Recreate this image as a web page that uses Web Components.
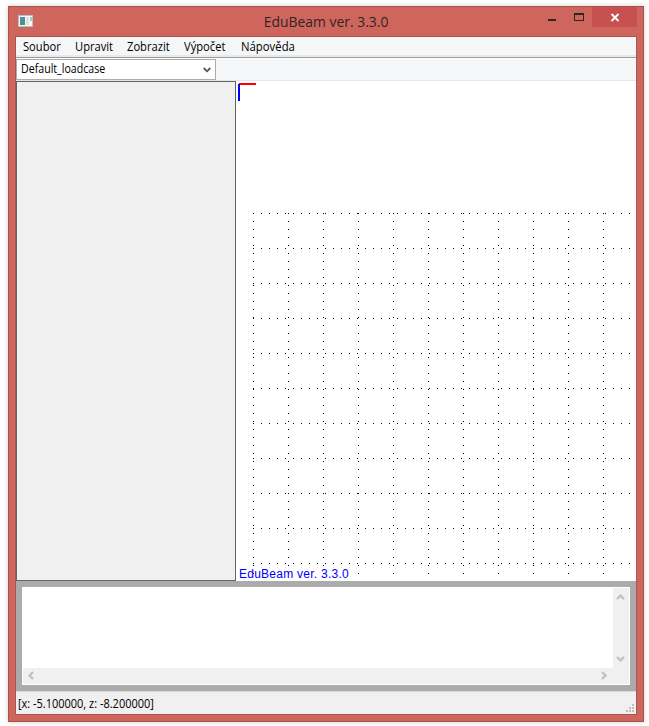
<!DOCTYPE html>
<html lang="cs"><head><meta charset="utf-8"><title>EduBeam</title>
<style>html,body{margin:0;background:#fff}body{width:649px;height:726px;overflow:hidden;font-family:"Open Sans","Noto Sans",sans-serif}</style></head>
<body>
<app-window>
<title-bar slot="title">EduBeam ver. 3.3.0</title-bar>
<menu-bar><menu-item style="--w:38px;--s:.93">Soubor</menu-item><menu-item style="--w:38px;--s:.93">Upravit</menu-item><menu-item style="--w:43px;--s:.93">Zobrazit</menu-item><menu-item style="--w:43px;--s:.93">Výpočet</menu-item><menu-item style="--w:54px;--s:.945">Nápověda</menu-item></menu-bar>
<tool-bar><combo-box>Default_loadcase</combo-box></tool-bar>
<work-area><side-panel></side-panel><grid-canvas>EduBeam ver. 3.3.0</grid-canvas></work-area>
<output-pane></output-pane>
<status-bar>[x: -5.100000, z: -8.200000]</status-bar>
</app-window>
<script>
const define=(name,html,setup)=>customElements.define(name,class extends HTMLElement{
  constructor(){super();this.attachShadow({mode:'open'}).innerHTML=html;if(setup)setup(this.shadowRoot)}
});
define('app-window',`<style>:host{display:block;box-sizing:border-box;width:636px;height:716px;margin:6px 0 0 8px;background:#cf665e;border:1px solid #a9524b;padding:0 7px 7px 6px;box-shadow:0 0 5px #0003}
.client{display:flex;flex-direction:column;box-sizing:border-box;width:622px;height:679px;border:1px solid #ab554e;background:#fff}</style><slot name="title"></slot><div class="client"><slot></slot></div>`);
define('title-bar',`<style>:host{display:grid;grid-template-columns:1fr auto 1fr;height:29px;margin-right:-1px;color:#302523}
.icon{margin:8px 0 0 3px}.t{font-size:15.2px;line-height:29px;white-space:nowrap;transform:scaleX(.915)}.b{justify-self:end}svg{display:block}</style>
<svg class="icon" width="16" height="13"><defs><linearGradient id="g" x2="0" y2="1"><stop stop-color="#5b86b0"/><stop offset="1" stop-color="#3f9a72"/></linearGradient></defs><path fill="#b9bfc6" d="M0 0h15v12H0z"/><path fill="#f5f8f8" d="M1 1h13v10H1z"/><path fill="url(#g)" d="M2 2h5v8H2z"/><path fill="#dde6e2" d="M8 2h3v8H8z"/><path fill="#a9cbc4" d="M12 2h2v4h-2z"/></svg>
<div class="t"><slot></slot></div>
<svg class="b" width="89" height="29" shape-rendering="crispEdges"><path fill="#c75050" d="M44 0h45v20H44z"/><path fill="#302523" d="M0 12h8v2H0zM26 6h10v8H26zM27 8v5h8V8z" fill-rule="evenodd"/><path d="M63.5 7l7 7M70.5 7l-7 7" stroke="#fff" stroke-width="1.8" shape-rendering="auto"/></svg>`);
define('menu-bar',`<style>:host{display:flex;gap:14px;box-sizing:border-box;height:21px;padding-left:7px;background:#f4f6f8;border-bottom:1px solid #9b9b9b;box-shadow:inset 0 -2px #e9e9e9}</style><slot></slot>`);
define('menu-item',`<style>:host{display:block;width:var(--w);font-size:12px;line-height:20px;color:#000}span{display:inline-block;white-space:nowrap;transform:scaleX(var(--s));transform-origin:0 0}</style><span><slot></slot></span>`);
define('tool-bar',`<style>:host{display:block;box-sizing:border-box;height:23px;padding-top:1px;background:linear-gradient(#fff 1px,#f4f6f8 1px);border-bottom:1px solid #e7e7e7}</style><slot></slot>`);
define('combo-box',`<style>:host{display:flex;justify-content:space-between;box-sizing:border-box;width:200px;height:21px;padding:0 4px;border:1px solid #acacac;background:#fff;font-size:12px;line-height:18px}span{transform:scaleX(.885);transform-origin:0 0}svg{margin-top:7px}</style><span><slot></slot></span><svg width="8" height="6"><path d="M.7 1l3.3 3.3L7.3 1" fill="none" stroke="#555" stroke-width="1.8"/></svg>`);
define('work-area',`<style>:host{display:flex;height:500px}</style><slot></slot>`);
define('side-panel',`<style>:host{display:block;box-sizing:border-box;width:220px;height:500px;border:1px solid #646464;background:#f0f0f0}</style>`);
define('grid-canvas',`<style>:host{display:block;position:relative;width:400px;height:500px;background:#fff}svg{display:block}
span{position:absolute;left:3px;bottom:0;font:12px/14px "Liberation Sans",Arial,sans-serif;color:#00f;white-space:nowrap;letter-spacing:.25px}</style><svg width="400" height="500" shape-rendering="crispEdges"><path fill="red" d="M3 2h17v2H3z"/><path fill="#00f" d="M2 3h2v17H2z"/><path class="dots"/></svg><span><slot></slot></span>`,root=>{
  let d='';
  for(let y=132;y<=482;y+=35)for(let x=17;x<400;x+=8)d+=`M${x} ${y}h1v1h-1z`;
  for(let x=17;x<400;x+=35)for(let y=132;y<=492;y+=8)d+=`M${x} ${y}h1v1h-1z`;
  root.querySelector('.dots').setAttribute('d',d);
});
define('output-pane',`<style>:host{display:block;box-sizing:border-box;height:110px;padding:6px;background:#ababab}
div{display:grid;grid-template:80px 16px/590px 16px;box-sizing:border-box;width:608px;height:98px;border:1px solid #fff;background:#fff}
svg{display:block;background:#f0f0f0}.h{grid-column:1/3}path{fill:none;stroke:#bfbfbf;stroke-width:2.2}</style>
<div><i></i><svg width="16" height="80"><path d="M4 11L7.5 7.5l3.5 3.5M4 69l3.500 3.500L11 69"/></svg><svg class="h" width="606" height="16"><path d="M10 4L6.500 7.500l3.500 3.500M579 4l3.500 3.500-3.500 3.500"/></svg></div>`);
define('status-bar',`<style>:host{display:flex;justify-content:space-between;box-sizing:border-box;height:23px;padding-left:2px;border-top:1px solid #d7d7d7;background:#f0f0f0;font-size:12px;line-height:24px}span{transform:scaleX(.914);transform-origin:0 0;white-space:nowrap}svg{margin-top:12px}</style><span><slot></slot></span><svg width="10" height="10" shape-rendering="crispEdges"><path fill="#bfbfbf" d="M6 0h2v2H6zM3 3h2v2H3zM6 3h2v2H6zM0 6h2v2H0zM3 6h2v2H3zM6 6h2v2H6z"/></svg>`);
</script></body></html>
